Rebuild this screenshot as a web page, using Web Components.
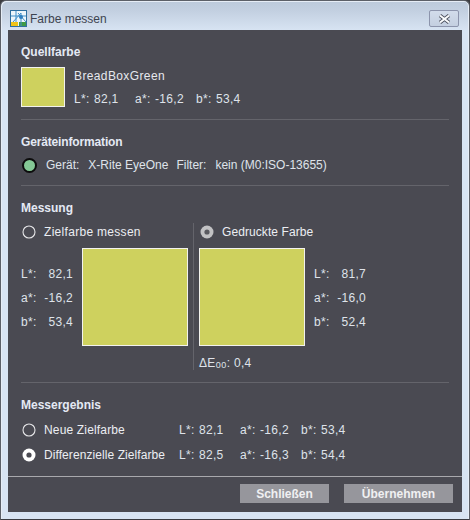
<!DOCTYPE html>
<html lang="de">
<head>
<meta charset="utf-8">
<title>Farbe messen</title>
<style>
  html, body { margin: 0; padding: 0; background: #3c3c40; }
  body { font: 12px "Liberation Sans", Arial, sans-serif; color: #e6e8ee; width: 470px; height: 520px; overflow: hidden; }
</style>
</head>
<body>
<app-window caption="Farbe messen">
  <form-section heading="Quellfarbe" style="--section-h: 90px">
    <div style="display:flex;gap:9px">
      <color-swatch style="--w:44px;--h:40px"></color-swatch>
      <div style="display:grid;grid-template-rows:18px 28px;align-items:center">
        <span style="letter-spacing:.38px">BreadBoxGreen</span>
        <lab-values l="82,1" a="-16,2" b="53,4"></lab-values>
      </div>
    </div>
  </form-section>
  <form-section heading="Geräteinformation" style="--section-h: 66px; --heading-ls: -.15px">
    <device-status device="X-Rite EyeOne" filter="kein (M0:ISO-13655)"></device-status>
  </form-section>
  <form-section heading="Messung" style="--section-h: 197px">
    <measure-panel></measure-panel>
  </form-section>
  <form-section heading="Messergebnis" last style="--section-h: 94px">
    <result-row label="Neue Zielfarbe" l="82,1" a="-16,2" b="53,4" style="--radio-ls:.16px"></result-row>
    <result-row label="Differenzielle Zielfarbe" l="82,5" a="-16,3" b="54,4" checked></result-row>
  </form-section>
  <action-button slot="actions" style="--w:89px">Schließen</action-button>
  <action-button slot="actions" style="--w:109px">Übernehmen</action-button>
</app-window>

<script>
class AppWindow extends HTMLElement {
  constructor() {
    super();
    this.attachShadow({ mode: 'open' });
  }

  connectedCallback() {
    const caption = this.getAttribute('caption') || '';
    this.shadowRoot.innerHTML = `
      <style>
        :host {
          display: grid;
          grid-template-rows: 29px 1fr;
          width: 470px;
          height: 520px;
          box-sizing: border-box;
          border-radius: 6px 6px 0 0;
          border: 1px solid #5c6068;
          border-bottom-color: #3a3c42;
          padding: 0 7px 7px;
          background: linear-gradient(180deg, #bccadb 0, #c3d0e1 10px, #d8e4f3 30px, #d8e4f3 100%);
          box-shadow: inset 1px 1px 0 #e6edf6, inset -1px 0 0 #e6edf6;
        }
        .title {
          display: flex;
          align-items: center;
          gap: 3px;
          padding: 6px 3px 0 2px;
          color: #3e4450;
          font-size: 12px;
        }
        .title svg { flex: none; }
        .title span { flex: 1; }
        .close {
          width: 30px;
          height: 17px;
          box-sizing: border-box;
          display: flex;
          align-items: center;
          justify-content: center;
          border: 1px solid #8c94ac;
          border-radius: 2px;
          background: linear-gradient(180deg, #d2dceb, #c4cfe0);
        }
        .body {
          display: grid;
          grid-template-rows: 1fr 36px;
          background: #4a4a52;
          min-height: 0;
        }
        .content { padding: 0 13px; min-height: 0; }
        .actions {
          display: flex;
          justify-content: flex-end;
          align-items: flex-start;
          gap: 15px;
          padding: 7px 9px 0 0;
          border-top: 1px solid #a9a9ad;
        }
      </style>
      <div class="title">
        <svg width="17" height="17" viewBox="0 0 17 17">
          <rect x="0.5" y="0.5" width="16" height="16" fill="#eef6fb" stroke="#2f6f9f"/>
          <rect x="1" y="12" width="7" height="4" fill="#f0c419"/>
          <rect x="9" y="12" width="7" height="4" fill="#3f9a46"/>
          <path d="M1 6h15M6 1v11M11 3v13M3 12l8-9M8 3l8 9" stroke="#3f8fc9" stroke-width="1" fill="none"/>
          <circle cx="11" cy="7" r="2" fill="#2f7fc0"/>
        </svg>
        <span>${caption}</span>
        <div class="close">
          <svg width="13" height="10" viewBox="0 0 13 10">
            <path d="M2 1.5 L11 8.5 M11 1.5 L2 8.5" stroke="#4a4f5c" stroke-width="3.6" fill="none"/>
            <path d="M2 1.5 L11 8.5 M11 1.5 L2 8.5" stroke="#fbfcfe" stroke-width="2" fill="none"/>
          </svg>
        </div>
      </div>
      <div class="body">
        <div class="content"><slot></slot></div>
        <div class="actions"><slot name="actions"></slot></div>
      </div>
    `;
  }
}

class FormSection extends HTMLElement {
  constructor() {
    super();
    this.attachShadow({ mode: 'open' });
  }

  connectedCallback() {
    const heading = this.getAttribute('heading') || '';
    this.shadowRoot.innerHTML = `
      <style>
        :host {
          display: block;
          height: var(--section-h);
          box-sizing: border-box;
          border-bottom: 1px solid #64646b;
          padding-top: 14px;
        }
        :host([last]) { border-bottom: 0; }
        h2 {
          margin: 0 0 7px;
          height: 16px;
          line-height: 16px;
          font-size: 12px;
          font-weight: bold;
          letter-spacing: var(--heading-ls, 0);
          color: #e4e9f4;
        }
      </style>
      <h2>${heading}</h2>
      <slot></slot>
    `;
  }
}

class ColorSwatch extends HTMLElement {
  constructor() {
    super();
    this.attachShadow({ mode: 'open' }).innerHTML = `
      <style>
        :host {
          display: block;
          flex: none;
          width: var(--w);
          height: var(--h);
          box-sizing: border-box;
          border: 1px solid #f2f2ee;
          background: #ced15e;
        }
      </style>
    `;
  }
}

class LabValues extends HTMLElement {
  constructor() {
    super();
    this.attachShadow({ mode: 'open' });
  }

  connectedCallback() {
    const pair = (k) => `<span class="k">${k}*:</span><span class="v">${this.getAttribute(k.toLowerCase())}</span>`;
    this.shadowRoot.innerHTML = `
      <style>
        :host {
          display: grid;
          grid-template-columns: 20px 41px 20px 41px 20px 40px;
          letter-spacing: .3px;
          white-space: nowrap;
          color: #dfe3ea;
        }
      </style>
      ${pair('L')}${pair('a')}${pair('b')}
    `;
  }
}

class RadioOption extends HTMLElement {
  constructor() {
    super();
    this.attachShadow({ mode: 'open' });
  }

  connectedCallback() {
    const mark = this.hasAttribute('disabled')
      ? '<circle cx="7" cy="7" r="6.5" fill="#c2c2c4"/><circle cx="7" cy="7" r="2.6" fill="#5a5a60"/>'
      : this.hasAttribute('checked')
        ? '<circle cx="7" cy="7" r="6.5" fill="#fff"/><circle cx="7" cy="7" r="2.6" fill="#4a4a52"/>'
        : '<circle cx="7" cy="7" r="6" fill="none" stroke="#e6e6e8" stroke-width="1.1"/>';
    this.shadowRoot.innerHTML = `
      <style>
        :host {
          display: inline-flex;
          align-items: center;
          gap: 8px;
          padding-left: 1px;
          letter-spacing: var(--radio-ls, .08px);
          white-space: nowrap;
          color: #eceef3;
        }
        svg { flex: none; }
      </style>
      <svg width="14" height="14" viewBox="0 0 14 14">${mark}</svg>
      <slot></slot>
    `;
  }
}

class DeviceStatus extends HTMLElement {
  constructor() {
    super();
    this.attachShadow({ mode: 'open' });
  }

  connectedCallback() {
    this.shadowRoot.innerHTML = `
      <style>
        :host {
          display: flex;
          align-items: center;
          height: 16px;
          white-space: nowrap;
          color: #dfe3ea;
        }
        .led {
          flex: none;
          width: 11px;
          height: 11px;
          margin: 0 9px 0 1px;
          border: 2px solid #0c0c0c;
          border-radius: 50%;
          background: #84c895;
        }
        .gap { margin-right: 9px; }
        .gap2 { margin-right: 8px; }
      </style>
      <span class="led"></span>
      <span class="gap">Gerät:</span>
      <span class="gap2">${this.getAttribute('device')}</span>
      <span class="gap">Filter:</span>
      <span>${this.getAttribute('filter')}</span>
    `;
  }
}

class LabColumn extends HTMLElement {
  constructor() {
    super();
    this.attachShadow({ mode: 'open' });
  }

  connectedCallback() {
    const row = (k) => `<span>${k}*:</span><span class="v">${this.getAttribute(k.toLowerCase())}</span>`;
    this.shadowRoot.innerHTML = `
      <style>
        :host {
          display: grid;
          grid-template-columns: 20px 32px;
          grid-auto-rows: 24px;
          align-items: center;
          align-content: center;
          height: 96px;
          padding-top: 2px;
          letter-spacing: .3px;
          color: #dfe3ea;
        }
        .v { text-align: right; }
      </style>
      ${row('L')}${row('a')}${row('b')}
    `;
  }
}

class MeasurePanel extends HTMLElement {
  constructor() {
    super();
    this.attachShadow({ mode: 'open' });
  }

  connectedCallback() {
    this.shadowRoot.innerHTML = `
      <style>
        :host {
          display: grid;
          grid-template-columns: 173px 1fr;
          height: 147px;
        }
        .left { border-right: 1px solid #64646b; }
        .right { padding-left: 5px; }
        .head { height: 25px; display: flex; align-items: flex-start; padding-top: 2px; box-sizing: border-box; }
        .row { display: flex; align-items: flex-start; height: 98px; gap: 9px; }
        .delta { margin-top: 10px; line-height: 14px; letter-spacing: .3px; color: #dfe3ea; white-space: nowrap; }
        .delta sub { font-size: 9px; line-height: 0; vertical-align: baseline; letter-spacing: .5px; position: relative; top: 1px; }
        .delta b { font-weight: normal; }
      </style>
      <div class="left">
        <div class="head"><radio-option style="--radio-ls:.3px">Zielfarbe messen</radio-option></div>
        <div class="row">
          <lab-column l="82,1" a="-16,2" b="53,4"></lab-column>
          <color-swatch style="--w:106px;--h:98px"></color-swatch>
        </div>
      </div>
      <div class="right">
        <div class="head"><radio-option disabled>Gedruckte Farbe</radio-option></div>
        <div class="row">
          <color-swatch style="--w:106px;--h:98px"></color-swatch>
          <lab-column l="81,7" a="-16,0" b="52,4"></lab-column>
        </div>
        <div class="delta">ΔE<sub>00</sub>: <b>0,4</b></div>
      </div>
    `;
  }
}

class ResultRow extends HTMLElement {
  constructor() {
    super();
    this.attachShadow({ mode: 'open' });
  }

  connectedCallback() {
    const checked = this.hasAttribute('checked') ? 'checked' : '';
    this.shadowRoot.innerHTML = `
      <style>
        :host {
          display: grid;
          grid-template-columns: 158px auto;
          align-items: center;
          height: 25px;
          margin-top: -3px;
          margin-bottom: 3px;
        }
      </style>
      <radio-option ${checked}>${this.getAttribute('label')}</radio-option>
      <lab-values l="${this.getAttribute('l')}" a="${this.getAttribute('a')}" b="${this.getAttribute('b')}"></lab-values>
    `;
  }
}

class ActionButton extends HTMLElement {
  constructor() {
    super();
    this.attachShadow({ mode: 'open' }).innerHTML = `
      <style>
        :host {
          display: flex;
          align-items: center;
          justify-content: center;
          width: var(--w);
          height: 19px;
          background: #96969c;
          color: #f0f0f2;
          font-weight: bold;
          cursor: default;
        }
      </style>
      <slot></slot>
    `;
  }
}

customElements.define('app-window', AppWindow);
customElements.define('form-section', FormSection);
customElements.define('color-swatch', ColorSwatch);
customElements.define('lab-values', LabValues);
customElements.define('radio-option', RadioOption);
customElements.define('device-status', DeviceStatus);
customElements.define('lab-column', LabColumn);
customElements.define('measure-panel', MeasurePanel);
customElements.define('result-row', ResultRow);
customElements.define('action-button', ActionButton);
</script>
</body>
</html>
